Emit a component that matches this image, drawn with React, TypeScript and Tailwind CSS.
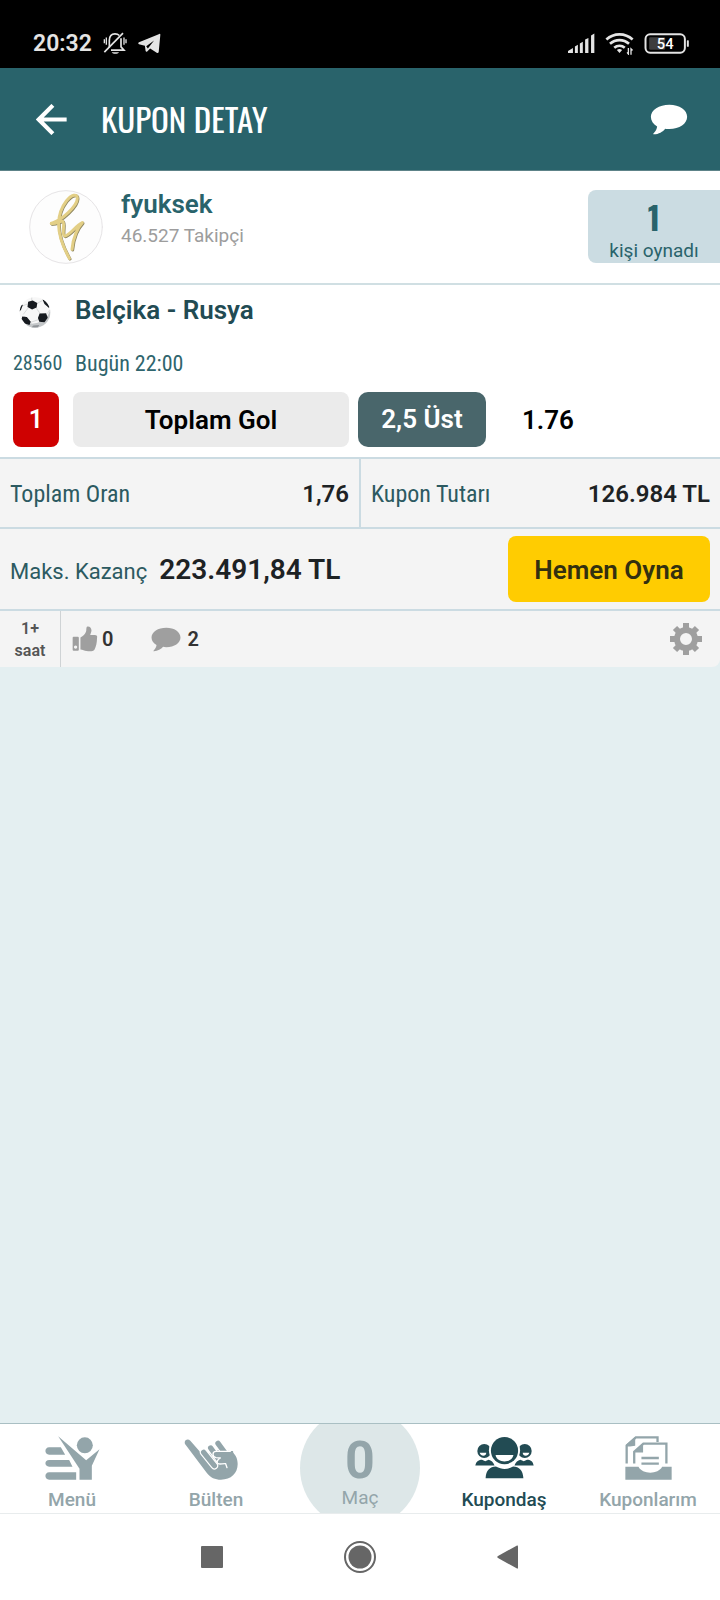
import { ReactNode } from 'react'

const condensed = "font-['Roboto_Condensed','Liberation_Sans_Narrow',Roboto,sans-serif]"
const oswald = "font-[Oswald,'Roboto_Condensed','Liberation_Sans_Narrow',sans-serif]"

function StatusBar() {
  return (
    <div className="flex h-[68px] items-center justify-between bg-black pt-[18px] pr-[30px] pl-[33px] text-[#e4e4e4]">
      <div className="flex items-center gap-[11px]">
        <span className="pt-[2px] text-[23px] leading-7 font-semibold">20:32</span>
        <svg viewBox="310 94 72 68" className="h-[23px] w-6" fill="none" stroke="currentColor" strokeWidth="5">
          <path d="M329 140V119c0-13 7-20 17-20 6 0 10 2 13 5M364 112v26l9 10H334" />
          <path d="M314 154 370 97" strokeWidth="5" />
          <path d="M336 154h22c-4 6-18 6-22 0z" fill="currentColor" stroke="none" />
          <path d="M320 110v22M314 115v12M373 110v22M379 115v12" strokeWidth="4" />
        </svg>
        <svg viewBox="412 100 70 62" className="h-[21px] w-[23px]" fill="currentColor">
          <path d="M477 102c2-1 3 0 3 2l-5 53c-1 3-3 4-6 2l-20-13-9 9c-2 2-4 1-5-2l-2-15-18-5c-3-2-3-4 0-6zM437 139l5 7 19-24z" />
        </svg>
      </div>
      <div className="flex items-center gap-[10px]">
        <svg viewBox="626 96 82 62" className="h-[21px] w-[27px]" fill="currentColor">
          <path d="M626 156v-6l15-9v15zM647 156v-20l9-5v25zM662 156v-29l9-5v34zM678 156v-41l10-5v46zM696 156v-53l10-6v59z" />
        </svg>
        <svg viewBox="737 95 86 70" className="h-[23px] w-[29px]" fill="none" stroke="currentColor" strokeWidth="8">
          <path d="M740 118c23-21 57-21 80 0M751 131c17-15 41-15 58 0M764 143c9-8 23-8 32 0" />
          <path d="M772 150c5-4 11-4 16 0l-8 9z" fill="currentColor" stroke="none" />
          <path d="M807 144v18l-4-5M815 164v-18l5 5" strokeWidth="4" />
        </svg>
        <svg viewBox="854 96 137 64" className="h-[21px] w-[46px]">
          <rect x="857" y="100" width="120" height="56" rx="14" fill="none" stroke="currentColor" strokeWidth="6" />
          <rect x="868" y="109" width="49" height="38" rx="4" fill="#3d3d3d" />
          <rect x="983" y="118" width="6" height="20" rx="2" fill="currentColor" />
          <text x="917" y="146" textAnchor="middle" fontSize="45" fontWeight="500" fill="#fff">
            54
          </text>
        </svg>
      </div>
    </div>
  )
}

function BubbleIcon({ className }: { className: string }) {
  return (
    <svg viewBox="870 310 114 94" className={className} fill="currentColor">
      <path d="M928 312c31 0 54 16 54 37s-23 37-54 37c-5 0-8 0-12-1-8 9-20 17-35 17-3 0-2-2 0-4 6-6 9-12 10-20-12-7-19-17-19-29 0-21 25-37 56-37z" />
    </svg>
  )
}

function Header() {
  return (
    <header className="flex h-[103px] items-center justify-between border-b border-[#5d8388] bg-[#29636b] pr-8 pl-9 text-white">
      <div className="flex items-center gap-[34px]">
        <button aria-label="Geri">
          <svg viewBox="109 313 90 90" className="size-[31px]" fill="none" stroke="currentColor" strokeWidth="12">
            <path d="M198 358H118M158 317 117 358l41 41" />
          </svg>
        </button>
        <h1 className={`text-[33px] leading-10 ${oswald}`}>KUPON DETAY</h1>
      </div>
      <button aria-label="Yorumlar">
        <BubbleIcon className="h-[31px] w-[38px]" />
      </button>
    </header>
  )
}

function Profile() {
  return (
    <section className="flex items-start justify-between border-b-2 border-[#d0dfe3] bg-white pt-[19px] pb-[19px] pl-[29px]">
      <div className="flex gap-[18px]">
        <svg viewBox="87 58 222 222" className="size-[74px]" fill="none" strokeLinecap="round" strokeLinejoin="round">
          <circle cx="198" cy="169" r="109" fill="#fdfdfd" stroke="#e6e4e6" strokeWidth="3" />
          <g transform="translate(2 2)" stroke="#8f8761" strokeWidth="9">
            <path d="M154 158C185 150 232 106 232 83c0-16-18-11-33 8-29 38-36 92 9 172" />
            <path d="M154 158c12 4 24-8 34-6 8 3-4 42 6 44 14 0 34-32 53-40-14 14-28 45-31 80" />
          </g>
          <g stroke="#e3cf86" strokeWidth="9">
            <path d="M154 158C185 150 232 106 232 83c0-16-18-11-33 8-29 38-36 92 9 172" />
            <path d="M154 158c12 4 24-8 34-6 8 3-4 42 6 44 14 0 34-32 53-40-14 14-28 45-31 80" />
          </g>
        </svg>
        <div>
          <h2 className="text-[26px] leading-7 font-semibold text-[#29636b]">fyuksek</h2>
          <p className="text-[19px] leading-9 text-[#9d9d9d]">46.527 Takipçi</p>
        </div>
      </div>
      <div className="flex h-[73px] w-[132px] flex-col items-center rounded-l-lg bg-[#cbdce2] pt-[11px] text-[#29636b]">
        <strong className={`text-[32px] leading-8 ${oswald}`}>1</strong>
        <span className="text-[19px] leading-9">kişi oynadı</span>
      </div>
    </section>
  )
}

function BallIcon() {
  return (
    <svg viewBox="56 376 98 100" className="h-[33px] w-8">
      <defs>
        <clipPath id="ball">
          <circle cx="105" cy="426" r="47" />
        </clipPath>
      </defs>
      <circle cx="105" cy="426" r="47" fill="#f7f7f7" />
      <g clipPath="url(#ball)">
        <path d="M153 396c2 24-8 42-24 54-14 10-36 14-56 6l14 20h66z" fill="#c4c7c9" />
        <path
          d="M95 376v14M84 412l-15 20M109 412l12 18M72 438l20 18M115 448l-23 8M111 398l16-8M82 400l-16 6M142 430l8-12M118 455l-8 16M92 456l4 14"
          stroke="#c9cccd"
          strokeWidth="2"
        />
        <path
          d="M84 393l14-4 14 8-2 14-14 6-14-8zM119 429l20-1 5 14-10 14-16-2-4-11zM66 438l14 2 12 14-4 10-14-4-10-14zM128 386l12 4 10 16-2 6-14-12zM60 404l8-2-6 16-6 6z"
          fill="#161a1f"
        />
        <path d="M100 466l18-2-4 8h-20z" fill="#8f9397" />
      </g>
    </svg>
  )
}

function Match() {
  return (
    <section className="bg-white pb-[10px] pl-[13px]">
      <div className="flex items-center">
        <span className="w-[62px] shrink-0 pt-1 pl-[6px]">
          <BallIcon />
        </span>
        <h3 className="text-[26px] leading-[50px] font-semibold text-[#224b53]">Belçika - Rusya</h3>
      </div>
      <div className={`flex pt-3 text-[22px] leading-[34px] text-[#2f656d] ${condensed}`}>
        <span className="w-[62px] shrink-0 text-xl leading-8">28560</span>
        <span>Bugün 22:00</span>
      </div>
      <div className="flex h-[66px] items-end text-[26px] font-semibold">
        <span className="flex h-[55px] w-[46px] items-center justify-center rounded-lg bg-[#cf0101] text-[25px] text-white">
          1
        </span>
        <span className="ml-[14px] flex h-[55px] flex-[276] items-center justify-center rounded-lg bg-[#ebebeb] pt-[2px] text-black">
          Toplam Gol
        </span>
        <span className="ml-[9px] flex h-[55px] flex-[128] items-center justify-center rounded-[10px] bg-[#49666b] text-white">
          2,5 Üst
        </span>
        <span className="flex h-[55px] flex-[234] items-center text-black">
          <span className="ml-9 pt-[2px]">1.76</span>
        </span>
      </div>
    </section>
  )
}

function Totals() {
  return (
    <section className="bg-[#f4f4f4] text-[#1d2224]">
      <dl className="flex h-[72px] border-y-2 border-[#cbdbe2]">
        <div className="flex flex-1 items-center justify-between border-r-2 border-[#cbdbe2] px-[10px] pt-[2px]">
          <dt className={`text-2xl text-[#2c5a61] ${condensed}`}>Toplam Oran</dt>
          <dd className="text-2xl font-semibold">1,76</dd>
        </div>
        <div className="flex flex-1 items-center justify-between px-[10px] pt-[2px]">
          <dt className={`text-2xl text-[#2c5a61] ${condensed}`}>Kupon Tutarı</dt>
          <dd className="text-2xl font-semibold">126.984 TL</dd>
        </div>
      </dl>
      <div className="flex h-[82px] items-center justify-between border-b-2 border-[#cbdbe2] px-[10px]">
        <p className="flex items-baseline gap-3 pt-[2px]">
          <span className="text-[22px] text-[#2c5a61]">Maks. Kazanç</span>
          <strong className="text-[28px] font-semibold">223.491,84 TL</strong>
        </p>
        <button className="h-[66px] w-[202px] rounded-lg bg-[#ffcc01] pt-[2px] text-[26px] font-semibold text-[#33300f]">
          Hemen Oyna
        </button>
      </div>
    </section>
  )
}

function Actions() {
  return (
    <section className="flex h-[56px] items-center rounded-br-lg bg-[#f4f4f4] pr-[18px] text-[#333]">
      <p className="flex h-full w-[61px] items-center justify-center border-r border-[#cfd3d5] pt-[2px] text-center text-base leading-[22px] font-semibold text-[#555]">
        1+
        <br />
        saat
      </p>
      <button className="ml-[11px] flex items-center gap-1 text-xl font-semibold">
        <svg viewBox="215 318 78 80" className="size-[26px]" fill="#9f9f9f">
          <path d="M219 351h13q3 0 3 3v37q0 3-3 3h-13q-3 0-3-3v-37q0-3 3-3zM225 378a5 5 0 1 0 .1 0z" fillRule="evenodd" />
          <path d="M240 353c9-3 14-9 17-17 2-6 0-13 3-16 8-2 13 3 14 11 0 6-3 10-4 15h14c6 0 9 4 7 9 0 14-3 27-8 36-4 6-16 5-24 4-7-1-12-5-19-5z" />
        </svg>
        0
      </button>
      <button className="ml-[38px] flex items-center gap-[6px] text-xl font-semibold">
        <BubbleIcon className="h-[25px] w-[30px] text-[#9f9f9f]" />
        2
      </button>
      <button aria-label="Ayarlar" className="ml-auto">
        <svg viewBox="-16 -16 32 32" className="size-8" fill="none" stroke="#9f9f9f">
          <circle r="9" strokeWidth="6" />
          <path d="M0-16V-10M0 10V16M-16 0H-10M10 0H16" strokeWidth="6" />
          <path d="M-11-11-7-7M7 7 11 11M-11 11-7 7M7-7 11-11" strokeWidth="6" />
        </svg>
      </button>
    </section>
  )
}

interface NavItemProps {
  label: string
  active?: boolean
  children: ReactNode
}

function NavItem({ label, active, children }: NavItemProps) {
  return (
    <a
      href="#"
      className={`flex flex-col items-center pt-3 text-[19px] leading-7 font-medium ${active ? 'text-[#224b53]' : 'text-[#93a5aa]'}`}
    >
      <span className="flex h-11 items-start">{children}</span>
      <span className="pt-[6px]">{label}</span>
    </a>
  )
}

function BottomNav() {
  return (
    <nav className="grid h-[91px] grid-cols-5 overflow-hidden border-y border-t-[#a9bfc3] border-b-[#e8eced] bg-white">
      <NavItem label="Menü">
        <svg viewBox="137 76 164 132" className="h-11 w-[55px]" fill="currentColor">
          <path d="M149 110h35l13 22h-48c-15 0-15-22 0-22zM149 148h60l10 20h-70c-15 0-15-20 0-20zM149 185h81v22h-81c-15 0-15-22 0-22z" />
          <path d="M176 77 260 149 300 116 277 165V207H240V174z" />
          <circle cx="256" cy="104" r="24" />
        </svg>
      </NavItem>
      <NavItem label="Bülten">
        <svg viewBox="553 76 192 132" className="h-11 w-16" fill="none" strokeLinecap="round" strokeLinejoin="round">
          <path
            d="M556 100c-4-10 7-18 16-10l40 46 44-18 36 3c15 8 22 22 22 39 0 28-20 47-50 47-18 0-31-6-43-21z"
            fill="currentColor"
          />
          <path d="M655 98l22 30" stroke="#fff" strokeWidth="23" />
          <path d="M655 98l22 30" stroke="currentColor" strokeWidth="16" />
          <path d="M633 112l26 36" stroke="#fff" strokeWidth="23" />
          <path d="M633 112l26 36" stroke="currentColor" strokeWidth="16" />
          <path d="M612 125l32 40" stroke="#fff" strokeWidth="23" />
          <path d="M612 125l32 40" stroke="currentColor" strokeWidth="16" />
          <path d="M700 121h-51c-12 0-12 17 0 19l13 1c-9 6-12 12-8 16 6 6 14 1 24 2l4 12 24-10z" fill="currentColor" />
          <path d="M692 122h-43c-12 0-12 17 0 19l13 1c-9 6-12 12-8 16 6 5 14 0 24 1l4 12" stroke="#fff" strokeWidth="4" />
        </svg>
      </NavItem>
      <a
        href="#"
        className="-mt-4 flex size-[120px] flex-col items-center justify-self-center rounded-full bg-[#dde7e8] pt-[30px] text-[#93a5aa]"
      >
        <span className="text-[52px] leading-[46px] font-bold">0</span>
        <span className="text-[19px] leading-7">Maç</span>
      </a>
      <NavItem label="Kupondaş" active>
        <svg viewBox="583 79 178 127" className="h-[43px] w-[59px]">
          <g fill="currentColor">
            <circle cx="611" cy="123" r="21" />
            <circle cx="733" cy="123" r="21" />
            <path d="M584 167c2-14 12-18 20-18l10 5 10-5c8 2 14 6 18 18zM702 167c4-12 10-16 18-18l10 5 10-5c10 0 18 4 20 18z" />
          </g>
          <path d="M597 128h20c0 12-17 12-20 0zM747 128h-20c0 12 17 12 20 0z" fill="#fff" />
          <circle cx="672" cy="121" r="47" fill="#fff" />
          <circle cx="672" cy="122" r="41" fill="currentColor" />
          <path d="M645 135h54c-4 26-50 26-54 0z" fill="#fff" />
          <path d="M615 205c1-23 13-35 31-35 10 5 17 7 26 7s16-2 26-7c18 0 30 12 31 35z" fill="currentColor" />
        </svg>
      </NavItem>
      <NavItem label="Kuponlarım">
        <svg viewBox="191 74 143 134" className="h-11 w-[47px]">
          <path
            d="M196 158V103L224 78H290V92M219 158V122L247 97H317V158"
            fill="none"
            stroke="currentColor"
            strokeWidth="7"
          />
          <path d="M195 106V100L222 76V104L206 106zM218 124 246 98V124z" fill="currentColor" />
          <path d="M192 168h40c12 24 60 24 72 0h29v39H192z" fill="currentColor" />
          <path d="M241 141h53M241 158h53" stroke="currentColor" strokeWidth="7" />
        </svg>
      </NavItem>
    </nav>
  )
}

function SystemNav() {
  return (
    <div className="flex h-[86px] items-center justify-center gap-[120px] bg-white text-[#666]">
      <button aria-label="Son uygulamalar">
        <svg viewBox="0 0 22 22" className="size-[22px]">
          <rect width="22" height="22" rx="1" fill="currentColor" />
        </svg>
      </button>
      <button aria-label="Ana ekran">
        <svg viewBox="0 0 34 34" className="size-[34px]">
          <circle cx="17" cy="17" r="15" fill="none" stroke="currentColor" strokeWidth="2" />
          <circle cx="17" cy="17" r="11.5" fill="currentColor" />
        </svg>
      </button>
      <button aria-label="Geri">
        <svg viewBox="0 0 22 24" className="h-6 w-[22px]">
          <path d="M1 11 20 .5q1-.5 1 1v21q0 1.500-1 1L1 13q-1.500-1 0-2z" fill="currentColor" />
        </svg>
      </button>
    </div>
  )
}

function App() {
  return (
    <div className="flex min-h-screen flex-col bg-[#e4eff1] font-[Roboto,sans-serif]">
      <StatusBar />
      <Header />
      <main className="flex-1">
        <Profile />
        <Match />
        <Totals />
        <Actions />
      </main>
      <BottomNav />
      <SystemNav />
    </div>
  )
}

export default App
